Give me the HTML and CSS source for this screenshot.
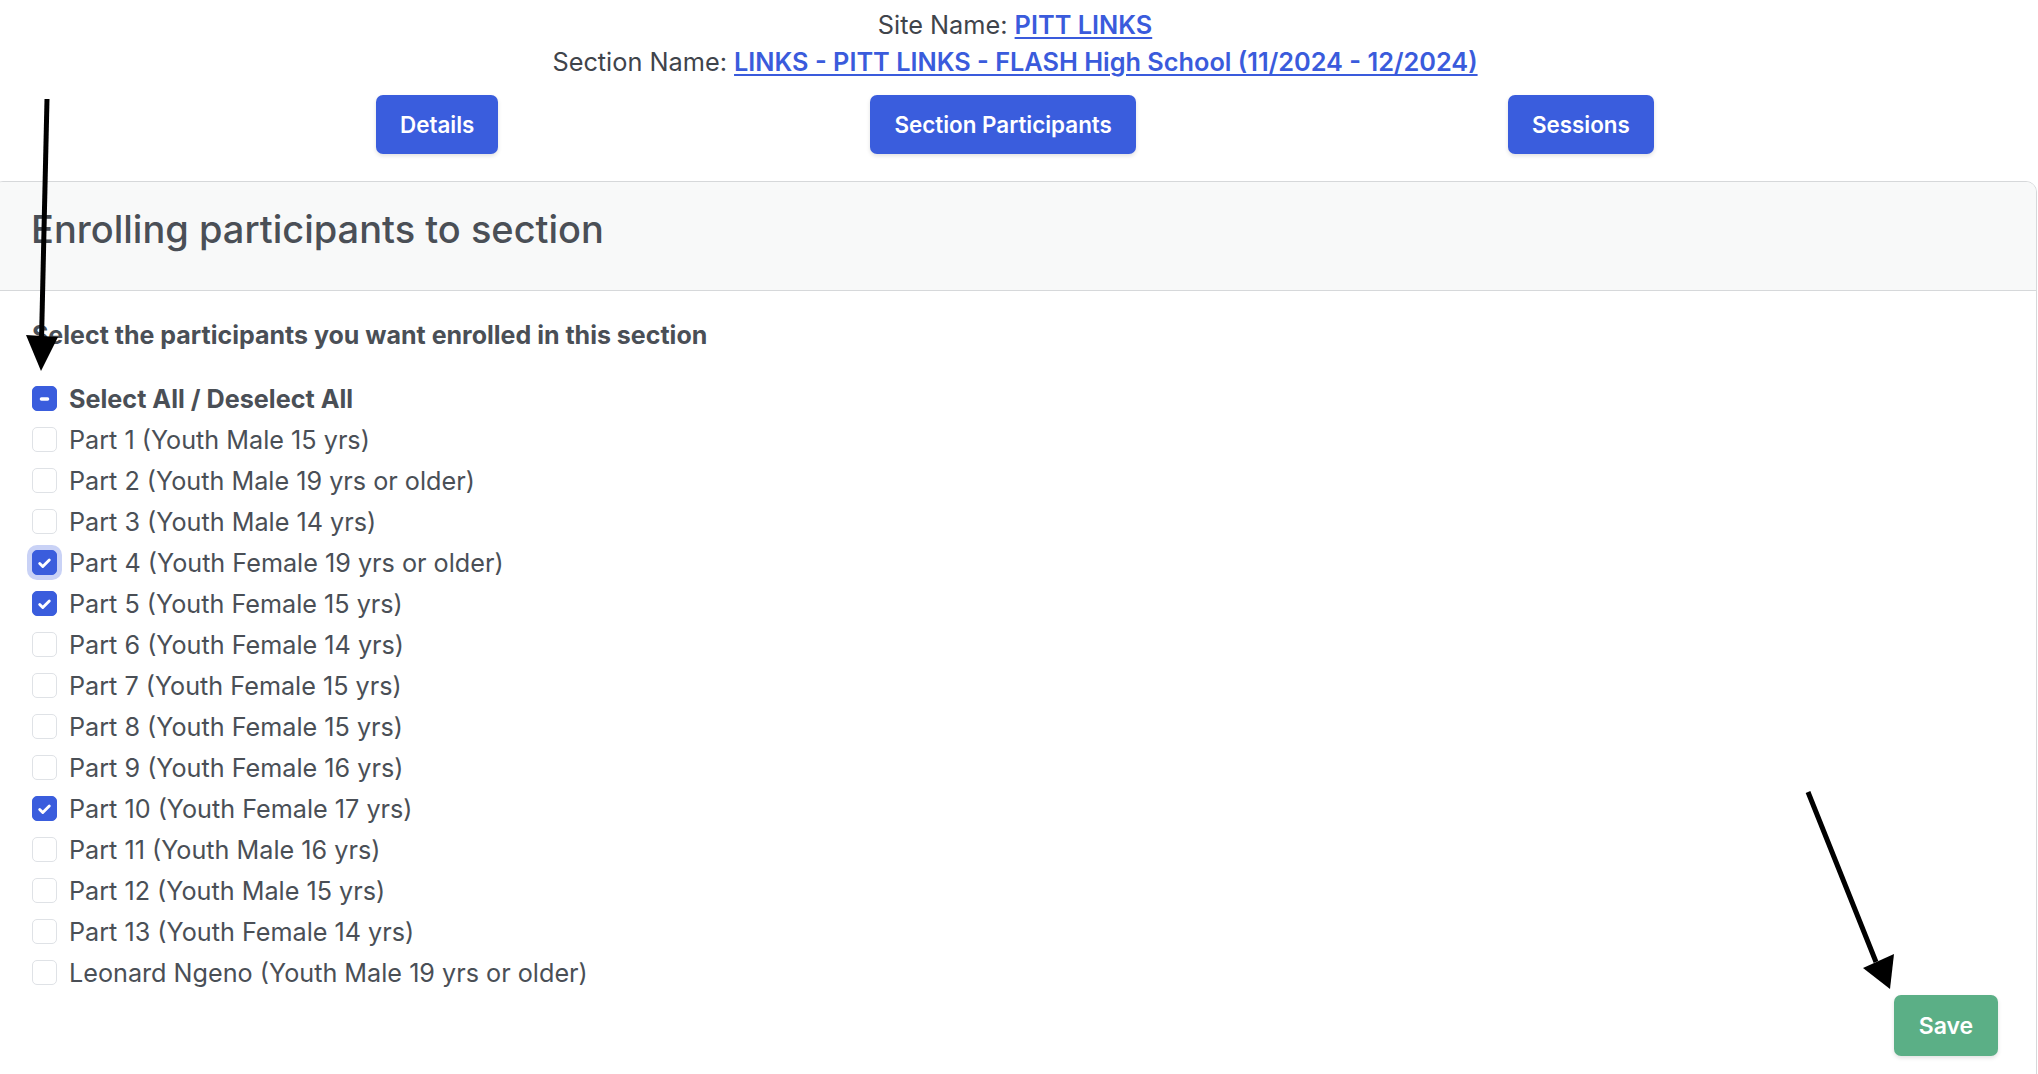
FILE: index.html
```html
<!DOCTYPE html>
<html lang="en">
<head>
<meta charset="utf-8">
<title>Enrolling participants to section</title>
<link rel="stylesheet" href="styles.css">
</head>
<body>
<div class="page">
  <div class="info">
    <div class="info-line">Site Name: <a href="#" class="link">PITT LINKS</a></div>
    <div class="info-line">Section Name: <a href="#" class="link">LINKS - PITT LINKS - FLASH High School (11/2024 - 12/2024)</a></div>
  </div>
  <div class="tabs">
    <button class="btn btn-primary">Details</button>
    <button class="btn btn-primary">Section Participants</button>
    <button class="btn btn-primary">Sessions</button>
  </div>
  <div class="card">
    <div class="card-header">Enrolling participants to section</div>
    <div class="card-body">
      <div class="lead">Select the participants you want enrolled in this section</div>
      <div class="list">
        <label class="row row-all"><span class="box on"><svg viewBox="0 0 24 24" width="24" height="24"><rect x="7" y="10.2" width="10" height="3.6" rx="1.8" fill="#fff"/></svg></span><span>Select All / Deselect All</span></label>
        <label class="row"><span class="box"></span><span>Part 1 (Youth Male 15 yrs)</span></label>
        <label class="row"><span class="box"></span><span>Part 2 (Youth Male 19 yrs or older)</span></label>
        <label class="row"><span class="box"></span><span>Part 3 (Youth Male 14 yrs)</span></label>
        <label class="row"><span class="box on focus"><svg viewBox="0 0 24 24" width="24" height="24"><path d="M7 12.5l3.2 3.2L17 8.8" fill="none" stroke="#fff" stroke-width="3" stroke-linecap="round" stroke-linejoin="round"/></svg></span><span>Part 4 (Youth Female 19 yrs or older)</span></label>
        <label class="row"><span class="box on"><svg viewBox="0 0 24 24" width="24" height="24"><path d="M7 12.5l3.2 3.2L17 8.8" fill="none" stroke="#fff" stroke-width="3" stroke-linecap="round" stroke-linejoin="round"/></svg></span><span>Part 5 (Youth Female 15 yrs)</span></label>
        <label class="row"><span class="box"></span><span>Part 6 (Youth Female 14 yrs)</span></label>
        <label class="row"><span class="box"></span><span>Part 7 (Youth Female 15 yrs)</span></label>
        <label class="row"><span class="box"></span><span>Part 8 (Youth Female 15 yrs)</span></label>
        <label class="row"><span class="box"></span><span>Part 9 (Youth Female 16 yrs)</span></label>
        <label class="row"><span class="box on"><svg viewBox="0 0 24 24" width="24" height="24"><path d="M7 12.5l3.2 3.2L17 8.8" fill="none" stroke="#fff" stroke-width="3" stroke-linecap="round" stroke-linejoin="round"/></svg></span><span>Part 10 (Youth Female 17 yrs)</span></label>
        <label class="row"><span class="box"></span><span>Part 11 (Youth Male 16 yrs)</span></label>
        <label class="row"><span class="box"></span><span>Part 12 (Youth Male 15 yrs)</span></label>
        <label class="row"><span class="box"></span><span>Part 13 (Youth Female 14 yrs)</span></label>
        <label class="row"><span class="box"></span><span>Leonard Ngeno (Youth Male 19 yrs or older)</span></label>
      </div>
      <div class="actions">
        <button class="btn btn-success">Save</button>
      </div>
    </div>
  </div>
</div>
<svg class="annotations" width="2038" height="1074" viewBox="0 0 2038 1074">
  <line x1="47" y1="99" x2="41.5" y2="340" stroke="#000" stroke-width="5"/>
  <polygon points="26,335 58,337 41,371" fill="#000"/>
  <line x1="1808" y1="792" x2="1876" y2="962" stroke="#000" stroke-width="5"/>
  <polygon points="1863,968 1894,954 1890,989" fill="#000"/>
</svg>
</body>
</html>
```

FILE: styles.css
```css
* { box-sizing: border-box; }

html, body {
  margin: 0;
  padding: 0;
  background: #fff;
  overflow: hidden;
}

body {
  position: relative;
  font-family: Inter, "Noto Sans", "Liberation Sans", sans-serif;
  color: #4a4f56;
}

.page {
  margin-left: -8px;
  width: calc(100% + 8px);
}

.info {
  padding-top: 6px;
  text-align: center;
  font-size: 25.3px;
  line-height: 37px;
  color: #3f444b;
}

.link {
  color: #3a5bdc;
  font-weight: 600;
  text-decoration: underline;
  text-underline-offset: 3px;
  text-decoration-thickness: 2px;
}

.tabs {
  display: flex;
  justify-content: space-evenly;
  padding: 0 12px;
  margin-top: 15px;
}

.btn {
  font-family: Inter, "Noto Sans", "Liberation Sans", sans-serif;
  font-size: 22.4px;
  font-weight: 600;
  color: #fff;
  border: none;
  border-radius: 7px;
  height: 59px;
  padding: 0 24px;
  box-shadow: 0 2px 4px rgba(0, 0, 0, 0.12);
  cursor: pointer;
}

.btn-primary { background: #3a5ddd; }

.btn-success {
  background: #5baf86;
  height: 61px;
  width: 104px;
  padding: 0;
  font-size: 23px;
}

.card {
  margin-top: 27px;
  margin-right: 1px;
  border: 1px solid #d6d8da;
  border-radius: 11px;
  overflow: hidden;
}

.card-header {
  height: 109px;
  display: flex;
  align-items: center;
  padding-left: 38px;
  padding-bottom: 14px;
  background: #f8f9f9;
  border-bottom: 1px solid #d6d8da;
  font-size: 38px;
  font-weight: 500;
  color: #4a4f56;
}

.card-body {
  padding: 24px 38px 40px 39px;
}

.lead {
  font-size: 25px;
  font-weight: 700;
  line-height: 41px;
  margin-bottom: 22px;
}

.list {
  display: flex;
  flex-direction: column;
}

.row {
  display: flex;
  align-items: center;
  gap: 12px;
  height: 41px;
  font-size: 25.2px;
  color: #4a4f56;
}

.row-all { font-weight: 700; }

.box {
  width: 25px;
  height: 25px;
  flex: none;
  border: 1px solid #dfe2e6;
  border-radius: 5px;
  background: #fff;
  display: flex;
  align-items: center;
  justify-content: center;
}

.box.on {
  background: #3a5ddd;
  border-color: #3a5ddd;
}

.box.focus {
  box-shadow: 0 0 0 5px #c9d2f6;
}

.actions {
  display: flex;
  justify-content: flex-end;
  margin-top: 2px;
}

.annotations {
  position: absolute;
  left: 0;
  top: 0;
  pointer-events: none;
}
```
